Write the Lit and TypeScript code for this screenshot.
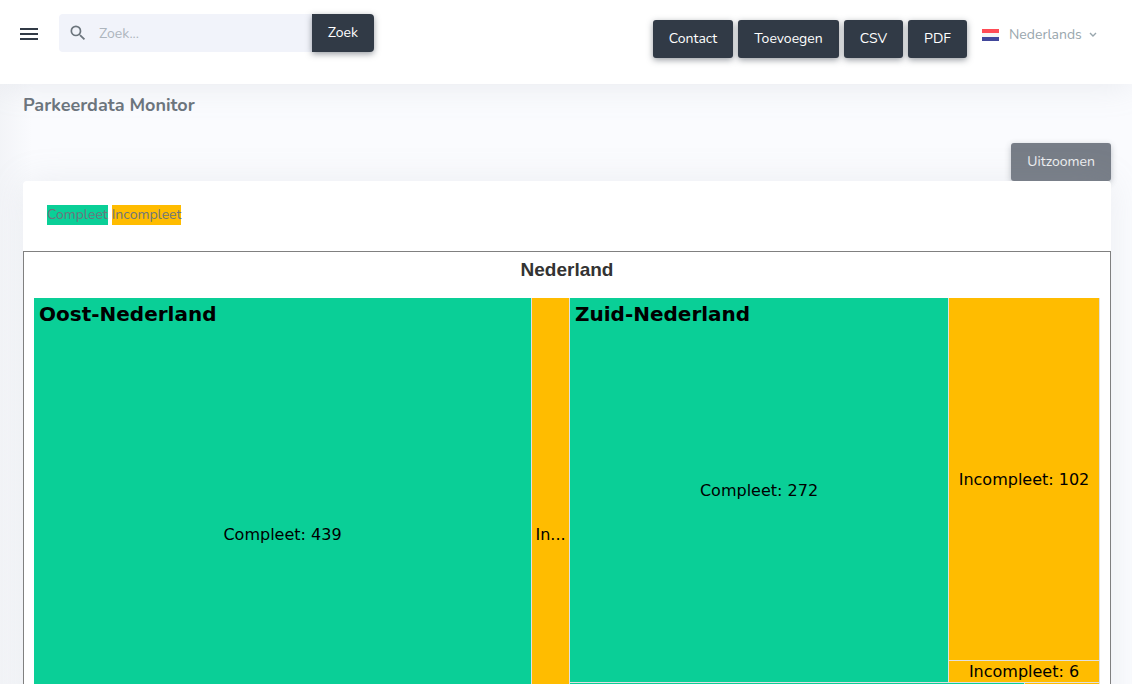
import { LitElement, html, css } from "lit";
import { customElement, state } from "lit/decorators.js";

interface Tile {
  kind: "complete" | "incomplete";
  area: string;
  region?: string;
  label: string;
}

const TILES: Tile[] = [
  { kind: "complete", area: "oost-c", region: "Oost-Nederland", label: "Compleet: 439" },
  { kind: "incomplete", area: "oost-i", label: "In..." },
  { kind: "complete", area: "zuid-c", region: "Zuid-Nederland", label: "Compleet: 272" },
  { kind: "incomplete", area: "zuid-i", label: "Incompleet: 102" },
  { kind: "incomplete", area: "zuid-x", label: "Incompleet: 6" },
];

@customElement("parking-treemap")
export class ParkingTreemap extends LitElement {
  static styles = css`
    :host {
      display: block;
      border: 1px solid #808080;
      background: #fff;
      padding: 0 10px 10px;
      font-family: Verdana, "DejaVu Sans", sans-serif;
      color: #000;
    }
    .title {
      margin: 0;
      padding: 6px 0 16px;
      text-align: center;
      font: 700 19px/24px "Liberation Sans", Arial, sans-serif;
      color: #333;
    }
    .map {
      display: grid;
      grid-template-columns: 535fr 529fr;
      gap: 1px;
      padding-right: 1px;
      background: #e0e0e0;
      height: 472px;
    }
    .east {
      display: grid;
      grid-template-columns: 497fr 37fr;
      gap: 1px;
    }
    .other {
      display: grid;
      grid-template-rows: 384fr 87fr;
      gap: 1px;
      min-width: 0;
    }
    .south {
      display: grid;
      grid-template-columns: 378fr 150fr;
      gap: 1px;
    }
    .stack {
      display: grid;
      grid-template-rows: 362fr 21fr;
      gap: 1px;
    }
    .rest {
      display: grid;
      grid-template-columns: 454fr 74fr;
      gap: 1px;
    }
    .tile {
      display: grid;
      grid-template: 1fr / 1fr;
      align-items: center;
      min-width: 0;
      min-height: 0;
      font-size: 16px;
      line-height: 20px;
      text-align: center;
    }
    .complete {
      background: #0acf97;
    }
    .incomplete {
      background: #ffbc00;
    }
    .region,
    .label {
      grid-area: 1 / 1;
      min-width: 0;
      white-space: nowrap;
    }
    .label {
      padding-top: 1px;
    }
    .region {
      align-self: start;
      margin: 0;
      padding: 4px 5px;
      text-align: left;
      font-size: 20px;
      line-height: 24px;
      font-weight: 700;
    }
  `;

  private tile(area: string) {
    const t = TILES.find((x) => x.area === area)!;
    return html`<div class="tile ${t.kind}">
      ${t.region ? html`<h3 class="region">${t.region}</h3>` : null}
      <span class="label">${t.label}</span>
    </div>`;
  }

  render() {
    return html`
      <h2 class="title">Nederland</h2>
      <div class="map">
        <div class="east">${this.tile("oost-c")}${this.tile("oost-i")}</div>
        <div class="other">
          <div class="south">
            ${this.tile("zuid-c")}
            <div class="stack">${this.tile("zuid-i")}${this.tile("zuid-x")}</div>
          </div>
          <div class="rest">
            <div class="tile complete"></div>
            <div class="tile incomplete"></div>
          </div>
        </div>
      </div>
    `;
  }
}

@customElement("app-root")
export class AppRoot extends LitElement {
  static styles = css`
    :host {
      display: block;
      height: 100vh;
      overflow: hidden auto;
      scrollbar-width: none;
      background: #fafbfe;
      color: #6c757d;
      font: 400 14px/20px Nunito, Lato, sans-serif;
    }
    * {
      box-sizing: border-box;
    }
    .topbar {
      display: flex;
      align-items: flex-start;
      min-height: 84px;
      padding: 14px 35px 0 20px;
      background: #fff;
      box-shadow: 0 0 35px rgba(154, 161, 171, 0.2);
    }
    button,
    input,
    select {
      font: inherit;
    }
    .menu {
      display: flex;
      margin: 14px 21px 0 0;
      padding: 0;
      border: 0;
      background: none;
      cursor: pointer;
    }
    .search {
      display: flex;
      flex: 0 1 315px;
    }
    .field {
      display: flex;
      flex: 1;
      align-items: center;
      min-width: 0;
      padding-left: 9px;
      background: #f1f3fa;
      border-radius: 4px 0 0 4px;
    }
    .field input {
      flex: 1;
      min-width: 0;
      height: 38px;
      margin-left: 11px;
      padding: 0;
      border: 0;
      outline: 0;
      background: none;
      color: #6c757d;
    }
    .field input::placeholder {
      color: #adb5bd;
      opacity: 1;
    }
    .btn {
      height: 38px;
      padding: 0 16px 1px;
      border: 0;
      border-radius: 3px;
      background: #313a46;
      color: #fff;
      box-shadow: 0 2px 6px rgba(49, 58, 70, 0.5);
      white-space: nowrap;
      cursor: pointer;
    }
    .search .btn {
      border-radius: 0 4px 4px 0;
    }
    .tools {
      display: flex;
      gap: 5px;
      margin: 6px 0 0 auto;
    }
    .language {
      display: flex;
      align-items: center;
      height: 20px;
      margin: 11px 0 0 15px;
      color: #98a6ad;
    }
    .flag {
      margin-right: 10px;
    }
    .language select {
      appearance: none;
      margin: 0;
      padding: 0;
      border: 0;
      background: none;
      color: inherit;
    }
    .chevron {
      margin-left: 7px;
    }
    .content {
      padding: 0 21px 24px 23px;
      background: linear-gradient(to right, rgba(154, 161, 171, 0.08), transparent 32px);
    }
    .heading {
      margin: 0;
      padding-top: 9px;
      font-size: 18px;
      line-height: 24px;
      font-weight: 700;
    }
    .actions {
      display: flex;
      justify-content: flex-end;
      padding-top: 26px;
    }
    .btn.muted {
      background: #777d87;
      color: #eeeff1;
      box-shadow: 0 2px 6px rgba(49, 58, 70, 0.3);
    }
    .card {
      position: relative;
      background: #fff;
      border-radius: 4px;
      box-shadow: 0 0 35px rgba(154, 161, 171, 0.15);
    }
    .legend {
      display: flex;
      gap: 4px;
      padding: 24px 24px 26px;
    }
    .key-complete {
      background: #0acf97;
    }
    .key-incomplete {
      background: #ffbc00;
    }
  `;

  @state() private query = "";

  render() {
    return html`
      <header class="topbar">
        <button class="menu" aria-label="Menu">
          <svg width="18" height="12" viewBox="0 0 18 12" fill="#313a46">
            <path d="M0 0h18v2H0zM0 5h18v2H0zM0 10h18v2H0z" />
          </svg>
        </button>
        <form class="search" role="search" @submit=${(e: Event) => e.preventDefault()}>
          <label class="field">
            <svg width="20" height="20" viewBox="0 0 24 24" fill="#6c757d" aria-hidden="true">
              <path
                d="M9.5 3A6.5 6.5 0 0 1 16 9.5c0 1.610-.59 3.090-1.560 4.230l.27.27h.79l5 5-1.5 1.5-5-5v-.79l-.27-.27A6.516 6.516 0 0 1 9.5 16 6.5 6.5 0 0 1 3 9.5 6.5 6.5 0 0 1 9.5 3m0 2C7 5 5 7 5 9.5S7 14 9.5 14 14 12 14 9.5 12 5 9.5 5z"
              />
            </svg>
            <input
              type="text"
              aria-label="Zoek"
              placeholder="Zoek..."
              .value=${this.query}
              @input=${(e: InputEvent) => (this.query = (e.target as HTMLInputElement).value)}
            />
          </label>
          <button class="btn" type="submit">Zoek</button>
        </form>
        <div class="tools">
          ${["Contact", "Toevoegen", "CSV", "PDF"].map(
            (t) => html`<button class="btn" type="button">${t}</button>`
          )}
        </div>
        <label class="language">
          <svg class="flag" width="17" height="12" viewBox="0 0 17 12" aria-hidden="true">
            <path fill="#ff4b55" d="M0 0h17v4H0z" />
            <path fill="#f5f5f5" d="M0 4h17v4H0z" />
            <path fill="#41479b" d="M0 8h17v4H0z" />
          </svg>
          <select aria-label="Taal">
            <option>Nederlands</option>
            <option>English</option>
          </select>
          <svg class="chevron" width="8" height="6" viewBox="0 0 8 6" fill="none" stroke="#98a6ad" stroke-width="1.4" aria-hidden="true">
            <path d="M1 1l3 3 3-3" />
          </svg>
        </label>
      </header>
      <main class="content">
        <h1 class="heading">Parkeerdata Monitor</h1>
        <div class="actions"><button class="btn muted" type="button">Uitzoomen</button></div>
        <section class="card">
          <div class="legend">
            <span class="key-complete">Compleet</span>
            <span class="key-incomplete">Incompleet</span>
          </div>
          <parking-treemap></parking-treemap>
        </section>
      </main>
    `;
  }
}
